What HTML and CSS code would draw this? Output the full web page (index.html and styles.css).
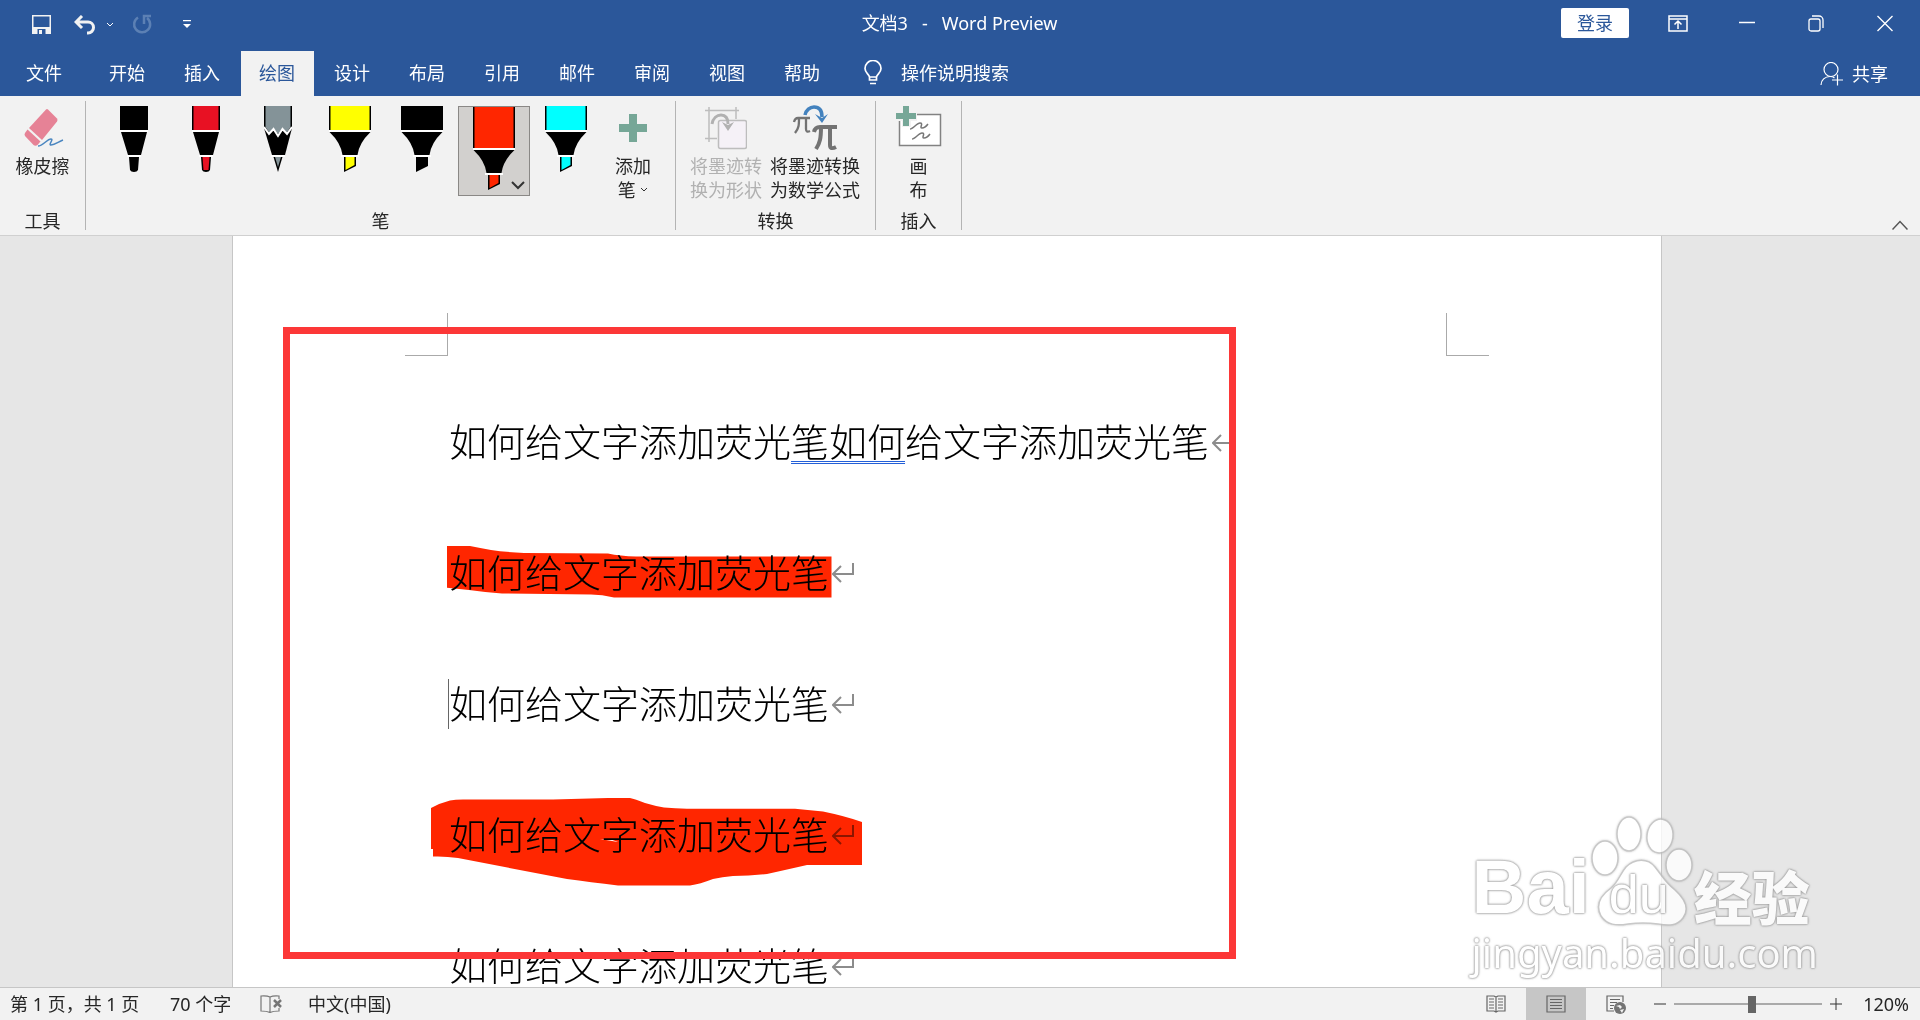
FILE: index.html
```html
<!DOCTYPE html>
<html lang="zh-CN">
<head>
<meta charset="utf-8">
<title>文档3 - Word Preview</title>
<link rel="stylesheet" href="styles.css">
</head>
<body>
<header class="titlebar">
  <div class="quick">
    <button class="qbtn save" aria-label="保存"><svg width="20" height="20" viewBox="0 0 20 20"><path d="M0 0h19v19H0z" fill="#f2f2f2"/><path d="M1.500 1.500h16V12h-16z" fill="#2b579a"/><path d="M5.500 14h8v5h-8z" fill="#2b579a"/><path d="M7 15h3v4H7z" fill="#f2f2f2"/></svg></button>
    <button class="qbtn undo" aria-label="撤消"><svg width="22" height="20" viewBox="0 0 22 20"><path d="M8 1 2 7l6 6M2.500 7H14a5.500 5.500 0 0 1 0 11h-1" fill="none" stroke="#f2f2f2" stroke-width="3"/></svg></button>
    <button class="qbtn more" aria-label="撤消列表"><svg width="8" height="6" viewBox="0 0 8 6"><path d="m1 1 3 3 3-3" fill="none" stroke="#fff"/></svg></button>
    <button class="qbtn redo" aria-label="重复"><svg width="20" height="21" viewBox="0 0 20 21"><path d="M6 3.500A8 8 0 1 0 15 4M12 10V2h7" fill="none" stroke="#5c80b4" stroke-width="2.500"/></svg></button>
    <button class="qbtn custom" aria-label="自定义快速访问工具栏"><svg width="8" height="9" viewBox="0 0 8 9"><path d="M0 .500h8" stroke="#fff" stroke-width="1.500"/><path d="M0 4h8L4 8z" fill="#fff"/></svg></button>
  </div>
  <div class="doc-title">文档3&nbsp;&nbsp; -&nbsp;&nbsp; Word Preview</div>
  <div class="window">
    <button class="login">登录</button>
    <button class="wbtn" aria-label="功能区显示选项"><svg width="20" height="17" viewBox="0 0 20 17"><path d="M1 1h18v15H1zM1 4h18M10 14V6M6.500 9.500 10 6l3.500 3.500" fill="none" stroke="#fff" stroke-width="1.500"/></svg></button>
    <button class="wbtn" aria-label="最小化"><svg width="16" height="17" viewBox="0 0 16 17"><path d="M0 7.500h16" stroke="#fff" stroke-width="1.500"/></svg></button>
    <button class="wbtn" aria-label="还原"><svg width="16" height="17" viewBox="0 0 16 17"><rect x="1" y="4" width="11" height="12" rx="2" fill="none" stroke="#fff" stroke-width="1.300"/><path d="M4 1h7a4 4 0 0 1 4 4v8" fill="none" stroke="#fff" stroke-width="1.300"/></svg></button>
    <button class="wbtn" aria-label="关闭"><svg width="16" height="17" viewBox="0 0 16 17"><path d="m.500 1 15 15M15.500 1l-15 15" stroke="#fff" stroke-width="1.400"/></svg></button>
  </div>
</header>

<nav class="tabs">
  <button class="file">文件</button>
  <button class="tab">开始</button>
  <button class="tab">插入</button>
  <button class="tab active">绘图</button>
  <button class="tab">设计</button>
  <button class="tab">布局</button>
  <button class="tab">引用</button>
  <button class="tab">邮件</button>
  <button class="tab">审阅</button>
  <button class="tab">视图</button>
  <button class="tab">帮助</button>
  <button class="tell"><svg width="18" height="25" viewBox="0 0 18 25"><path d="M5.500 20v-3C5 14 1 13 1 8.500a8 8 0 0 1 16 0C17 13 13 14 12.500 17v3zM5.500 17h7M6 23.500h6" fill="none" stroke="#fff" stroke-width="1.700"/></svg>操作说明搜索</button>
  <button class="share"><svg width="24" height="24" viewBox="0 0 24 24"><ellipse cx="11" cy="7.500" rx="7" ry="7" fill="none" stroke="#fff" stroke-width="1.200"/><path d="M1 23c0-5 4-8.500 9-8.500 2 0 3.500.5 4.500 1.500M17.500 12.500v11M12 18h11" fill="none" stroke="#fff" stroke-width="1.200"/></svg>共享</button>
</nav>

<section class="ribbon">
  <div class="group g-tools">
    <div class="items">
      <button class="big"><span class="icon"><svg width="42" height="40" viewBox="0 0 42 40"><g fill="#e68296"><path d="M24 1.500q1-1 2 0l9 9q1 1.500 0 3L20 32 7 20z"/><path d="m5.500 21.500 13 12-3 3.500q-2 1.500-4 0l-8.500-9q-1-1.500 0-3z"/></g><path d="M16 38c5 0 9-7 13-7 3 0-3 6 0 6 4 0 7-3 12-5" fill="none" stroke="#4a86c0" stroke-width="1.500"/></svg></span>橡皮擦</button>
    </div>
    <div class="label">工具</div>
  </div>
  <div class="group g-pens">
    <div class="items">
      <button class="pen" aria-label="黑色笔"><svg width="28" height="66" viewBox="0 0 28 66"><path d="M0 0h28v24H0z"/><path d="M0 24h28v2H0zM7 49h14v2H7z" fill="#fff"/><path d="M1 26h26l-6 23H8zM9 51h10l-1 13q-1 2-4 2t-4-2z"/></svg></button>
      <button class="pen" aria-label="红色笔"><svg width="28" height="66" viewBox="0 0 28 66"><path d="M0 0h28v24H0z"/><path d="M1.500 0h25v24h-25z" fill="#e81123"/><path d="M0 24h28v2H0zM7 49h14v2H7z" fill="#fff"/><path d="M1 26h26l-6 23H8zM9 51h10l-1 13q-1 2-4 2t-4-2z"/><path d="M10.500 51h7l-1 13h-5z" fill="#e81123"/></svg></button>
      <button class="pen" aria-label="铅笔"><svg width="28" height="66" viewBox="0 0 28 66"><path d="M0 0h28v22l-7 27H8L0 22z"/><path d="M1.500 0h25v21l-4 6-4-5-4.500 6-4.500-6-4 5-4-6z" fill="#849398"/><path d="m0 21 5 7 4.500-5 4.500 7 4.500-7 4.500 5 5-7" fill="none" stroke="#fff" stroke-width="2"/><path d="M7 49h14v2H7z" fill="#fff"/><path d="M9.500 51h9L14 66z"/><path d="M11 51h6l-3 10z" fill="#849398"/></svg></button>
      <button class="pen" aria-label="黄色荧光笔"><svg width="42" height="66" viewBox="0 0 42 66"><path d="M0 0h42v24H0z"/><path d="M1.500 0h39v24h-39z" fill="#ffff00"/><path d="M0 24h42v2H0zM12 49h18v2H12z" fill="#fff"/><path d="M.500 26h41Q30 37 28.500 49h-15Q12 37 .500 26zM15 51h12v9l-12 6z"/><path d="M16.500 51h9v8l-9 5z" fill="#ffff00"/></svg></button>
      <button class="pen" aria-label="黑色荧光笔"><svg width="42" height="66" viewBox="0 0 42 66"><path d="M0 0h42v24H0z"/><path d="M0 24h42v2H0zM12 49h18v2H12z" fill="#fff"/><path d="M.500 26h41Q30 37 28.500 49h-15Q12 37 .500 26zM15 51h12v9l-12 6z"/></svg></button>
      <button class="pen selected" aria-label="红色荧光笔"><svg width="42" height="84" viewBox="0 0 42 84"><path d="M0 0h42v42H0z"/><path d="M1.500 0h39v42h-39z" fill="#ff2600"/><path d="M0 42h42v2H0zM12 67h18v2H12z" fill="#fff"/><path d="M.500 44h41Q30 55 28.500 67h-15Q12 55 .500 44zM15 69h12v9l-12 6z"/><path d="M16.500 69h9v8l-9 5z" fill="#ff2600"/></svg><svg class="drop" width="14" height="9" viewBox="0 0 14 9"><path d="m1 1 6 6 6-6" fill="none" stroke="#333" stroke-width="2"/></svg></button>
      <button class="pen" aria-label="青色荧光笔"><svg width="42" height="66" viewBox="0 0 42 66"><path d="M0 0h42v24H0z"/><path d="M1.500 0h39v24h-39z" fill="#00ffff"/><path d="M0 24h42v2H0zM12 49h18v2H12z" fill="#fff"/><path d="M.500 26h41Q30 37 28.500 49h-15Q12 37 .500 26zM15 51h12v9l-12 6z"/><path d="M16.500 51h9v8l-9 5z" fill="#00ffff"/></svg></button>
      <button class="big add"><span class="icon"><svg width="28" height="28" viewBox="0 0 28 28"><path d="M10 0h8v10h10v8H18v10h-8V18H0v-8h10z" fill="#76a797"/></svg></span>添加<br>笔 <svg width="8" height="6" viewBox="0 0 8 6" class="mini"><path d="m1 1 3 3 3-3" fill="none" stroke="#333"/></svg></button>
    </div>
    <div class="label">笔</div>
  </div>
  <div class="group g-convert">
    <div class="items">
      <button class="big" disabled><span class="icon"><svg width="42" height="44" viewBox="0 0 42 44"><path d="M4 1v35M0 4.500h34M31 1v12M0 32.500h12" fill="none" stroke="#bdbdbd" stroke-width="1.500"/><rect x="13.500" y="14.500" width="28" height="28" rx="2" fill="#f5f1f7" stroke="#bdbdbd" stroke-width="1.500"/><path d="M7 18c1-6 5-9 9-9 5 0 7 3 7 9" fill="none" stroke="#b1b1b1" stroke-width="3"/><path d="m17 16 6 3 6-3-6 9z" fill="#b1b1b1"/></svg></span>将墨迹转<br>换为形状</button>
      <button class="big"><span class="icon"><svg width="46" height="46" viewBox="0 0 46 46"><g fill="none" stroke="#737373"><path d="M2 17q1-4 4-4h12M7 13c0 7 0 10-4 15M14 13v11q0 4 4 2" stroke-width="2.300"/><path d="M22 27q1-5 6-5h17M29 22c0 11-1 16-5 22M38 22v18q0 5 6 2" stroke-width="4"/></g><path d="M13 10c1-5 5-8 9-8 5 0 8 3 8 10" fill="none" stroke="#4382be" stroke-width="3.500"/><path d="m23 9 7 4 6-4-6 9z" fill="#4382be"/></svg></span>将墨迹转换<br>为数学公式</button>
    </div>
    <div class="label">转换</div>
  </div>
  <div class="group g-insert">
    <div class="items">
      <button class="big"><span class="icon"><svg width="46" height="44" viewBox="0 0 46 44"><path d="M3.500 8.500h41v31h-41z" fill="#fff" stroke="#828282" stroke-width="1.500"/><path d="M14 23c3 0 7-6 10-6 4 0-1 5 2 5q3 0 6-4M16 33c3 0 7-6 10-6 4 0-1 5 2 5q3 0 6-4" fill="none" stroke="#777" stroke-width="1.500"/><path d="M6 0h9v6h6v9h-6v6H6v-6H0V6h6z" fill="#f2f2f2"/><path d="M7 0h6v7h7v6h-7v7H7v-7H0V7h7z" fill="#76a797"/></svg></span>画<br>布</button>
    </div>
    <div class="label">插入</div>
  </div>
  <button class="collapse" aria-label="折叠功能区"><svg width="16" height="10" viewBox="0 0 16 10"><path d="m.500 9.500 7.500-8 7.500 8" fill="none" stroke="#555" stroke-width="1.500"/></svg></button>
</section>

<main class="workspace">
  <article class="page">
    <span class="crop left"></span>
    <span class="crop right"></span>
    <p>如何给文字添加荧光<span class="grammar">笔如何</span>给文字添加荧光笔<svg class="mark" width="22" height="20" viewBox="0 0 22 20"><path d="M21 0v11H2M9 3l-8 8 8 8" fill="none" stroke="#8c8c8c" stroke-width="2"/></svg></p>
    <p>如何给文字添加荧光笔<svg class="mark" width="22" height="20" viewBox="0 0 22 20"><path d="M21 0v11H2M9 3l-8 8 8 8" fill="none" stroke="#8c8c8c" stroke-width="2"/></svg></p>
    <p class="current">如何给文字添加荧光笔<svg class="mark" width="22" height="20" viewBox="0 0 22 20"><path d="M21 0v11H2M9 3l-8 8 8 8" fill="none" stroke="#8c8c8c" stroke-width="2"/></svg></p>
    <p>如何给文字添加荧光笔<svg class="mark" width="22" height="20" viewBox="0 0 22 20"><path d="M21 0v11H2M9 3l-8 8 8 8" fill="none" stroke="#8c8c8c" stroke-width="2"/></svg></p>
    <p>如何给文字添加荧光笔<svg class="mark" width="22" height="20" viewBox="0 0 22 20"><path d="M21 0v11H2M9 3l-8 8 8 8" fill="none" stroke="#8c8c8c" stroke-width="2"/></svg></p>
    <svg class="ink" width="450" height="350" viewBox="430 540 450 350"><path fill="#ff2600" d="M447 546H470Q480 548 491 550 505 552 524 553L608 553.500Q620 556 636 556.500H831.500V597.500H614Q602 594.500 591 594.500L502 593.500Q485 592 469 590L447 587.700z"/><path fill="#ff2600" fill-rule="evenodd" d="M431 808Q440 803 450 800.500 455 799.500 463 799.500H553L608 798H630Q635 799 645 803 655 806 664 807.500 675 808.500 687 808.700H795L823 811.500Q845 816 862 822V865H807Q785 870 767 874 750 876 733 876 722 877 713 879 700 884 690 885.500H618Q590 882 567 879L458 858Q445 856 433 856.500V849H431zM600 839 618 842 611 839.500z"/></svg>
    <div class="frame"></div>
  </article>
  <div class="watermark">
    <div class="brand"><span class="bai">Bai</span><span class="paw"><svg width="104" height="112" viewBox="0 0 104 112"><g fill="#fff" stroke="#bbb" stroke-width="1.500"><ellipse cx="15" cy="43" rx="13" ry="17"/><ellipse cx="39" cy="19" rx="12" ry="17"/><ellipse cx="70" cy="21" rx="13" ry="17" transform="rotate(8 70 21)"/><ellipse cx="89" cy="50" rx="13" ry="16"/><path d="M36 52c9-9 22-9 29 0 8 10 10 15 20 23 11 10 14 20 8 28-6 8-14 8-25 6q-15-2-30 0c-12 2-21 1-27-8-6-11-1-20 10-28 8-7 9-14 15-21z"/></g></svg><span class="du">du</span></span><span class="jy">经验</span></div>
    <div class="site">jingyan.baidu.com</div>
  </div>
</main>

<footer class="status">
  <button class="st pages">第 1 页，共 1 页</button>
  <button class="st words">70 个字</button>
  <button class="st" aria-label="校对"><svg width="22" height="18" viewBox="0 0 22 18"><path d="M10 2Q7 .500 1 1v15q6 0 9 1.500Q13 16 19 16v-3M10 2v15M10 2Q13 .500 19 1v3" fill="none" stroke="#777" stroke-width="1.200"/><path d="m14 5 7 7M21 5l-7 7" stroke="#777" stroke-width="2.500"/></svg></button>
  <button class="st">中文(中国)</button>
  <div class="views">
    <button class="view" aria-label="阅读视图"><svg width="20" height="18" viewBox="0 0 20 18"><path d="M1 1h7l2 1 2-1h7v15h-7l-2 1-2-1H1zM10 2v15M3 4h5M3 7h5M3 10h5M3 13h5M12 4h5M12 7h5M12 10h5M12 13h5" fill="none" stroke="#666" stroke-width="1.200"/></svg></button>
    <button class="view on" aria-label="页面视图"><svg width="20" height="18" viewBox="0 0 20 18"><path d="M1 1h18v16H1zM4 4.500h12M4 7.500h12M4 10.500h12M4 13.500h12" fill="none" stroke="#666" stroke-width="1.200"/></svg></button>
    <button class="view" aria-label="Web 版式视图"><svg width="20" height="19" viewBox="0 0 20 19"><path d="M8 16H1V1h16v6M4 4.500h10M4 7.500h7M4 10.500h4M4 13.500h3" fill="none" stroke="#666" stroke-width="1.200"/><circle cx="14" cy="13" r="6" fill="#737373"/><path d="m10 11 4-1 2 2-2 2-1-2zM14 15l4-1-2 4z" fill="#f2f2f2"/></svg></button>
  </div>
  <button class="zoom" aria-label="缩小"><svg width="12" height="12" viewBox="0 0 12 12"><path d="M0 6h12" stroke="#333"/></svg></button>
  <input class="slider" type="range" min="0" max="100" value="53" aria-label="缩放">
  <button class="zoom" aria-label="放大"><svg width="12" height="12" viewBox="0 0 12 12"><path d="M0 6h12M6 0v12" stroke="#333"/></svg></button>
  <button class="percent">120%</button>
</footer>
</body>
</html>
```
FILE: styles.css
```css
* { box-sizing: border-box; }
html, body { height: 100%; }
body {
  margin: 0;
  display: flex;
  flex-direction: column;
  overflow: hidden;
  background: #e6e6e6;
  color: #262626;
  font: 18px/24px "Noto Sans", "Noto Sans CJK SC", sans-serif;
}
button {
  margin: 0;
  padding: 0;
  border: 0;
  background: none;
  color: inherit;
  font: inherit;
  white-space: nowrap;
}
svg { flex: none; }

/* Title bar */
.titlebar {
  flex: none;
  height: 51px;
  display: grid;
  grid-template-columns: 1fr auto 1fr;
  padding-right: 1px;
  background: #2b579a;
  color: #fff;
}
.quick { display: flex; height: 49px; align-items: center; padding-left: 32px; }
.qbtn { display: flex; }
.undo { margin-left: 22px; }
.more { margin-left: 10px; }
.redo { margin-left: 18px; }
.custom { margin-left: 31px; }
.doc-title { line-height: 46px; }
.window { display: flex; height: 46px; align-items: center; justify-content: flex-end; }
.login {
  width: 68px;
  height: 30px;
  margin-right: 14px;
  border-radius: 2px;
  background: #fff;
  color: #2b579a;
}
.wbtn { width: 69px; height: 44px; display: flex; align-items: center; justify-content: center; }

/* Ribbon tabs */
.tabs { flex: none; height: 45px; display: flex; gap: 2px; background: #2b579a; color: #fff; }
.file { width: 89px; }
.file, .tab { padding: 0 1px 2px 0; }
.tab { width: 73px; }
.tab.active { background: #f2f2f2; color: #2b579a; }
.tell { display: flex; align-items: center; gap: 19px; margin-left: 23px; padding-bottom: 2px; }
.share { display: flex; align-items: center; gap: 8px; margin-left: auto; padding-right: 32px; }

/* Ribbon */
.ribbon {
  flex: none;
  height: 140px;
  display: flex;
  padding-top: 5px;
  background: #f2f2f2;
  border-bottom: 1px solid #d0d0d0;
}
.group {
  height: 129px;
  display: flex;
  flex-direction: column;
  justify-content: space-between;
  border-right: 1px solid #b4b4b4;
}
.items { display: flex; padding: 0 12px; }
.label { text-align: center; line-height: 18px; }
.g-tools .items { justify-content: center; padding: 0; }
.g-tools { width: 86px; }
.g-pens { width: 590px; }
.g-convert { width: 200px; }
.g-convert .items { gap: 8px; padding: 0 14px; }
.g-insert { width: 86px; }
.g-insert .items { justify-content: center; padding: 0; }
.big { display: block; text-align: center; }
.big:disabled { color: #b1b1b1; }
.icon { display: flex; height: 53px; align-items: center; justify-content: center; }
.pen { width: 72px; height: 90px; margin-top: 5px; display: flex; justify-content: center; position: relative; }
.pen.selected { background: #d2d0ce; outline: 1px solid #8a8886; outline-offset: -1px; }
.drop { position: absolute; right: 5px; bottom: 6px; }
.add { margin-left: 13px; }
.mini { vertical-align: 4px; }
.collapse { margin: auto 12px 5px auto; display: flex; }

/* Document area */
.workspace {
  flex: 1;
  min-height: 0;
  position: relative;
  overflow: hidden;
  padding: 0 26px 0 0;
}
.page {
  position: relative;
  width: 100%;
  max-width: 1430px;
  min-height: 100%;
  margin: 0 auto;
  padding: 138px 172px 0 216px;
  border: solid #c6c6c6;
  border-width: 0 1px;
  background: #fff;
  color: #000;
}
.page p {
  margin: 0;
  height: 131px;
  line-height: 131px;
  font-family: "Noto Sans CJK SC", sans-serif;
  font-size: 38px;
  font-weight: 300;
  white-space: nowrap;
}
.grammar { text-decoration: underline double #2460d8 1px; text-underline-offset: 5px; text-decoration-skip-ink: none; }
.mark { margin-left: 3px; vertical-align: 4px; }
.current { position: relative; }
.current::before { content: ""; position: absolute; left: -1px; top: 43px; width: 1px; height: 50px; background: #666; }
.crop { position: absolute; top: 77px; width: 43px; height: 43px; border: 0 solid #aaa; border-bottom-width: 1px; }
.crop.left { left: 172px; border-right-width: 1px; }
.crop.right { right: 172px; border-left-width: 1px; }
.ink { position: absolute; left: 197px; top: 304px; mix-blend-mode: multiply; }
.frame { position: absolute; left: 50px; top: 91px; width: 953px; height: 632px; border: 7px solid #fc3737; }

/* Watermark */
.watermark {
  position: absolute;
  right: 102px;
  bottom: 8px;
  opacity: 0.8;
  color: #fff;
  white-space: nowrap;
  text-shadow: 0 0 2px #888, 0 0 2px #888, 0 0 3px #aaa;
}
.brand { display: flex; align-items: flex-end; height: 112px; }
.bai { font: 700 76px/80px "Liberation Sans", sans-serif; }
.paw { position: relative; display: flex; }
.paw svg { filter: drop-shadow(0 0 1px #bbb); }
.du { position: absolute; left: 19px; bottom: 1px; font: 400 54px/64px "Liberation Sans", sans-serif; }
.jy { font: 900 58px/64px "Noto Sans CJK SC", sans-serif; }
.site { font: 400 40px/52px "Noto Sans", sans-serif; }

/* Status bar */
.status {
  flex: none;
  height: 33px;
  display: flex;
  align-items: center;
  padding: 0 11px 0 10px;
  background: #f2f2f2;
  border-top: 1px solid #c6c6c6;
}
.st { display: flex; margin-right: 26px; }
.pages { min-width: 134px; }
.words { min-width: 64px; }
.views { display: flex; align-self: stretch; margin-left: auto; margin-right: 8px; }
.view { width: 60px; display: flex; align-items: center; justify-content: center; }
.view.on { background: #c6c6c6; }
.zoom { display: flex; }
.slider {
  appearance: none;
  width: 148px;
  height: 18px;
  margin: 0 8px;
  background: linear-gradient(#aaa, #aaa) center / 100% 2px no-repeat, linear-gradient(#aaa, #aaa) center / 1px 8px no-repeat;
}
.slider::-webkit-slider-thumb { appearance: none; width: 8px; height: 17px; background: #666; }
.percent { width: 67px; text-align: right; }
```
